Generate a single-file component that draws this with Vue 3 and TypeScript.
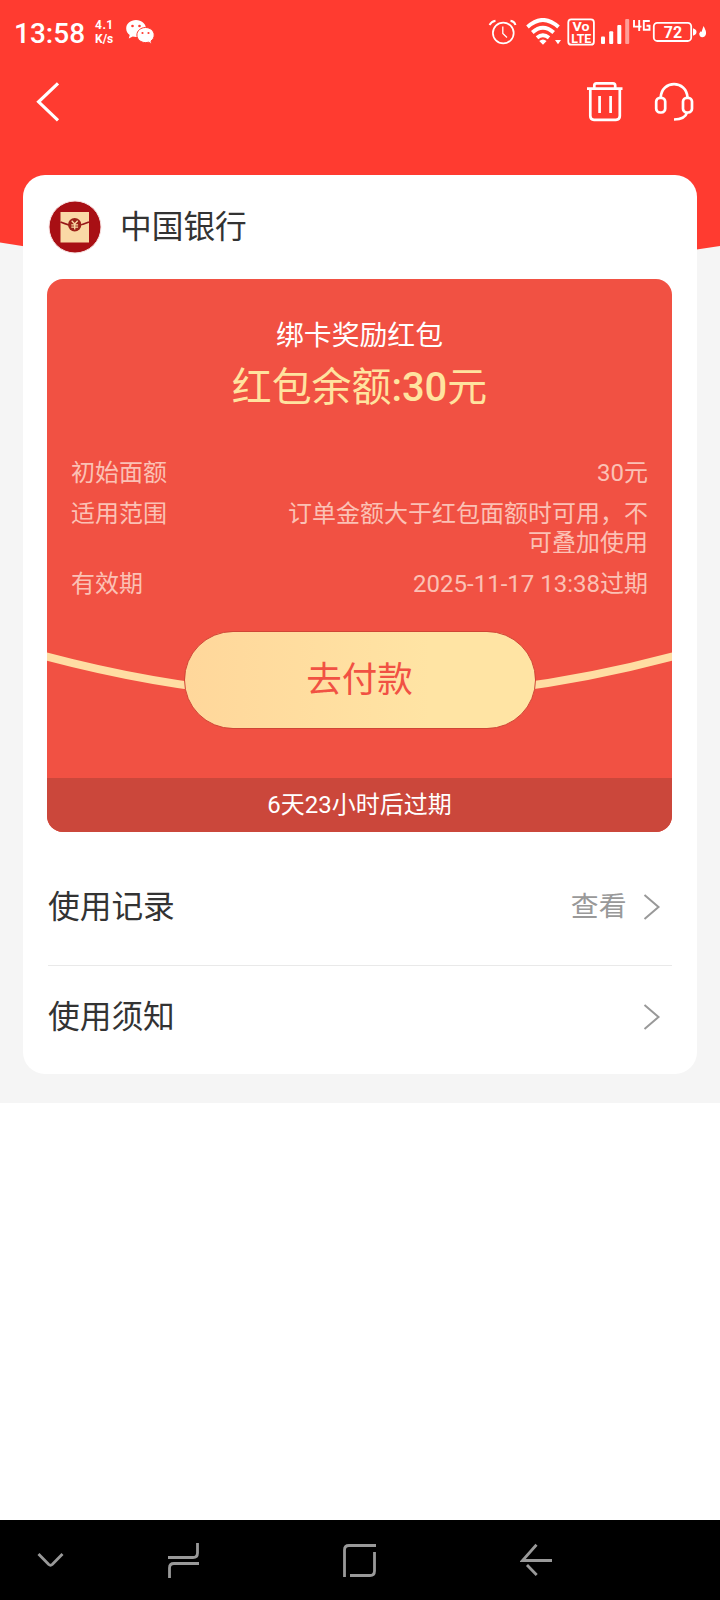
<script setup lang="ts">
interface Detail {
  label: string
  value: string
}

interface Entry {
  title: string
  hint: string
}

const details: Detail[] = [
  { label: '初始面额', value: '30元' },
  { label: '适用范围', value: '订单金额大于红包面额时可用，不可叠加使用' },
  { label: '有效期', value: '2025-11-17 13:38过期' },
]

const entries: Entry[] = [
  { title: '使用记录', hint: '查看' },
  { title: '使用须知', hint: '' },
]
</script>

<template>
  <div class="screen">
    <div class="page">
      <svg class="backdrop" width="720" height="270" viewBox="0 0 720 270">
        <path d="M0 0H720V246Q360 303 0 242.500Z" fill="#ff3b30" />
      </svg>

      <div class="status">
        <span class="time">13:58</span>
        <span class="speed"><span>4.1</span><span>K/s</span></span>
        <svg class="wechat" width="30" height="26" viewBox="125 19 30 26">
          <path d="M136 20c-5.600 0-9.800 3.700-9.800 8.400 0 2.700 1.300 5 3.500 6.500l-.9 3.500 3.900-2c1.100.3 2.100.5 3.300.5 5.500 0 9.900-3.800 9.900-8.500S141.500 20 136 20z" fill="#fff" />
          <path d="M145.500 27.500c-4.900 0-8.600 3.300-8.600 7.500s3.700 7.600 8.600 7.600c1.100 0 2-.2 3-.4l3.300 1.700-.8-2.900c2-1.400 3.200-3.500 3.200-6 0-4.200-3.900-7.500-8.700-7.500z" fill="#fff" stroke="#ff3b30" stroke-width="1" />
          <g fill="#ff3b30"><circle cx="132.500" cy="26" r="1.300" /><circle cx="139.500" cy="26" r="1.300" /><circle cx="142.500" cy="33" r="1.100" /><circle cx="148.500" cy="33" r="1.100" /></g>
        </svg>
        <span class="spacer"></span>
        <svg width="30" height="28" viewBox="488 18 30 28" fill="none" stroke="#fff" stroke-width="1.700">
          <circle cx="503.300" cy="33" r="10.400" />
          <path d="M502.800 26.500V33.500L507 37.500" stroke-width="1.300" />
          <path d="M489.500 25Q491.500 21.500 495.500 20.800M510.500 20.800Q514.500 21.500 515.500 25" stroke-width="1.900" />
        </svg>
        <svg class="wifi" width="36" height="28" viewBox="526 18 36 28" fill="none" stroke="#fff" stroke-width="3.800">
          <path d="M527.500 27Q542.800 12.800 558.500 27" />
          <path d="M532.300 32.500Q542.800 22.800 553.700 32.500" />
          <path d="M537 37.800Q542.800 32.800 549 37.800" />
          <path d="M539.200 41Q543 38 546.600 41L543 44.800ZM555 40H561L558 44.300Z" fill="#fff" stroke="none" />
        </svg>
        <svg class="volte" width="28" height="28" viewBox="566.500 17.500 28 28">
          <rect x="567.800" y="18.900" width="25.600" height="25.300" rx="3" fill="none" stroke="#fff" stroke-width="1.800" />
          <text x="572" y="30.600" font-size="13" textLength="17" lengthAdjust="spacingAndGlyphs">Vo</text>
          <text x="570.800" y="42.200" font-size="13" textLength="20" lengthAdjust="spacingAndGlyphs">LTE</text>
        </svg>
        <svg class="signal" width="30" height="28" viewBox="600 18 30 28" fill="#fff">
          <rect x="601" y="36.500" width="4" height="7.500" rx="1" />
          <rect x="609.200" y="31.200" width="4" height="12.800" rx="1" />
          <rect x="617.300" y="25" width="4" height="19" rx="1" />
          <rect x="625.200" y="19" width="4" height="25" rx="1" opacity=".5" />
        </svg>
        <svg class="net" width="19" height="28" viewBox="632 18 19 28" fill="none" stroke="#fff" stroke-width="1.900">
          <path d="M634 20V26.600H641.500M639.200 20V31M649.800 21H643.800V29.700H649.500V25.800H646.500" />
        </svg>
        <svg class="battery" width="56" height="28" viewBox="652 18 56 28">
          <rect x="653.800" y="22.800" width="37.400" height="18.200" rx="3.500" fill="none" stroke="#fff" stroke-width="1.800" />
          <path d="M693 28.300Q696.500 29.500 696.500 32Q696.500 34.500 693 35.700Z" fill="#fff" />
          <path d="M703.500 26Q706.500 31 706 34Q705 37.300 702.300 37.300Q699.300 37 699.200 33.500L700.700 31.200L701.500 32Z" fill="#fff" />
          <text x="673" y="37.800" text-anchor="middle" font-size="16">72</text>
        </svg>
      </div>

      <div class="navbar">
        <svg width="24" height="42" viewBox="36 81 24 42" fill="none" stroke="#fff" stroke-width="3.200">
          <path d="M58 83.300L38.600 101.800L58 120.300" />
        </svg>
        <span class="spacer"></span>
        <svg width="38" height="42" viewBox="586 81 38 42" fill="none" stroke="#fff" stroke-width="2.700">
          <path d="M587 88.600H622.500M594.300 88V85.500Q594.300 83.300 596.500 83.300H613Q615.200 83.300 615.200 85.500V88M590.300 88.500V116Q590.300 119.800 594 119.800H616Q619.800 119.800 619.800 116V88.500M599.600 96V113M610.600 96V113" />
        </svg>
        <svg class="headset" width="42" height="42" viewBox="653 81 42 42" fill="none" stroke="#fff" stroke-width="2.700">
          <rect x="656.200" y="97.800" width="9" height="14.700" rx="3.800" />
          <rect x="683" y="97.800" width="9" height="14.700" rx="3.800" />
          <path d="M660.700 97.500C661.500 79.700 686.500 79.700 687.500 97.500M687 112.500C686 116.500 681 119.300 674 119.500" />
        </svg>
      </div>

      <main class="card">
        <header class="bank">
          <svg width="54" height="54" viewBox="0 0 54 54">
            <circle cx="27" cy="27" r="26" fill="#a80f14" stroke="#f9e3e3" stroke-width="1" />
            <rect x="12.500" y="12" width="28.500" height="30.500" fill="#fad9a6" />
            <path d="M12.500 22Q20 25.500 27 25.500T41 22" fill="none" stroke="#97181a" stroke-width="1.500" />
            <circle cx="26.700" cy="24.800" r="6.700" fill="#9c2219" />
            <path d="M23.700 20.800L26.700 24L29.700 20.800M26.700 24V29.500M23.300 24.800H30.100M23.300 27.200H30.100" fill="none" stroke="#fad9a6" stroke-width="1.300" />
          </svg>
          <span>中国银行</span>
        </header>

        <section class="packet">
          <svg class="arc" width="625" height="90" viewBox="0 0 625 90">
            <path d="M-4 15.500Q312.500 100.500 629 15.500" fill="none" stroke="#ffdda3" stroke-width="8" />
          </svg>
          <h1>绑卡奖励红包</h1>
          <p class="balance">红包余额<b>:30</b>元</p>
          <dl>
            <div v-for="item in details" :key="item.label" class="detail">
              <dt>{{ item.label }}</dt>
              <dd>{{ item.value }}</dd>
            </div>
          </dl>
          <button class="pay" type="button">去付款</button>
          <footer>6天23小时后过期</footer>
        </section>

        <div v-for="entry in entries" :key="entry.title" class="entry">
          <span class="title">{{ entry.title }}</span>
          <span class="hint">{{ entry.hint }}</span>
          <svg width="18" height="26" viewBox="0 0 18 26" fill="none" stroke="#999" stroke-width="2">
            <path d="M1.500 1L15.500 13L1.500 25" />
          </svg>
        </div>
      </main>
    </div>

    <nav class="keys">
      <svg width="28" height="40" viewBox="36 1540 28 40"><path d="M38.500 1554L48.800 1564.500Q50.500 1566 52.200 1564.500L62.500 1554" /></svg>
      <svg class="recent" width="36" height="40" viewBox="166 1540 36 40"><path d="M168 1557.500H193Q197.500 1557.500 197.500 1553V1543M199 1563.500H174Q169.500 1563.500 169.500 1568V1578" /></svg>
      <svg class="home" width="36" height="40" viewBox="342 1540 36 40"><path d="M344.500 1577V1550Q344.500 1545.500 349 1545.500H376M374.500 1552V1571Q374.500 1575.500 370 1575.500H350" /></svg>
      <svg class="return" width="34" height="40" viewBox="520 1540 34 40"><path d="M536.500 1544.800L522.500 1560.500H552M527 1565L536.700 1575" /></svg>
    </nav>
  </div>
</template>

<style>
body {
  margin: 0;
  background: #fff;
}
</style>

<style scoped>
.screen {
  width: 720px;
  height: 1600px;
  display: flex;
  flex-direction: column;
  justify-content: space-between;
  overflow: hidden;
  background: #fff;
  font-family: Roboto, "Noto Sans CJK SC", sans-serif;
  color: #333;
}
svg {
  display: block;
  flex: none;
}
.page {
  position: relative;
  height: 1103px;
  background: #f5f5f5;
}
.backdrop {
  position: absolute;
  top: 0;
  left: 0;
}
.status {
  position: relative;
  display: flex;
  align-items: center;
  height: 64px;
  padding: 0 12px 0 14px;
  box-sizing: border-box;
  color: #fff;
}
.status text {
  fill: #fff;
  font-weight: 700;
}
.time {
  width: 81px;
  font-size: 28px;
  font-weight: 500;
  line-height: 32px;
  padding-top: 3px;
  box-sizing: border-box;
}
.speed {
  display: flex;
  flex-direction: column;
  width: 30px;
  font-size: 12px;
  font-weight: 700;
  line-height: 14px;
}
.speed span:first-child {
  letter-spacing: 0.500px;
}
.spacer {
  flex: 1;
}
.wifi {
  margin-left: 8px;
}
.volte {
  margin-left: 4.500px;
}
.signal {
  margin-left: 5.500px;
}
.net {
  margin-left: 2px;
}
.battery {
  margin-left: 1px;
}
.navbar {
  position: relative;
  display: flex;
  align-items: center;
  height: 76px;
  padding: 0 25px 0 36px;
}
.headset {
  margin-left: 29px;
}
.card {
  position: relative;
  height: 899px;
  margin: 35px 23px 0;
  padding: 0 25px 0 24px;
  box-sizing: border-box;
  border-radius: 22px;
  background: #fff;
}
.bank {
  display: flex;
  align-items: center;
  gap: 18px;
  height: 104px;
  padding-left: 1px;
  font-size: 31.700px;
}
.bank span {
  line-height: 48px;
  padding-top: 1px;
}
.packet {
  position: relative;
  display: flex;
  flex-direction: column;
  align-items: center;
  width: 625px;
  height: 553px;
  overflow: hidden;
  border-radius: 16px;
  background: #f15143;
  color: #fff;
}
.arc {
  position: absolute;
  left: 0;
  top: 361px;
}
h1 {
  margin: 37px 0 0;
  font-size: 27.840px;
  font-weight: 400;
  line-height: 40px;
}
.balance {
  margin: 6px 0 0;
  font-size: 39.900px;
  line-height: 52px;
  color: #ffe39f;
}
.balance b {
  font-weight: 500;
}
dl {
  display: flex;
  flex-direction: column;
  gap: 12px;
  width: 577px;
  margin: 45px 0 0;
  font-size: 24px;
  line-height: 29px;
  color: #fbc1b5;
}
.detail {
  display: flex;
  justify-content: space-between;
}
dd {
  width: 365px;
  margin: 0;
  text-align: right;
}
.pay {
  position: relative;
  width: 352px;
  height: 98px;
  margin: 32px 0 0;
  padding: 0 0 7px;
  border: 1px solid #d04535;
  border-radius: 49px;
  background: linear-gradient(90deg, #ffd79b, #ffe4a4 70%);
  font: inherit;
  font-size: 35.500px;
  color: #f15143;
}
footer {
  width: 100%;
  height: 54px;
  margin-top: auto;
  background: #cb473b;
  font-size: 24px;
  line-height: 54px;
  text-align: center;
}
.entry {
  display: flex;
  align-items: center;
  height: 102px;
  margin-left: 1px;
  padding-right: 11px;
  font-size: 31.700px;
  border-top: 1px solid #e9e9e9;
}
.packet + .entry {
  height: 133px;
  padding-top: 17px;
  border-top: 0;
  box-sizing: border-box;
}
.title {
  padding-bottom: 7px;
}
.hint {
  margin-left: auto;
  padding: 0 16.500px 6px 0;
  font-size: 27.840px;
  color: #999;
}
.keys {
  display: flex;
  align-items: center;
  height: 80px;
  padding-left: 36px;
  box-sizing: border-box;
  background: #000;
}
.keys path {
  fill: none;
  stroke: #999;
  stroke-width: 2.800px;
}
.recent {
  margin-left: 102px;
}
.home {
  margin-left: 140px;
}
.return {
  margin-left: 142px;
}
</style>
